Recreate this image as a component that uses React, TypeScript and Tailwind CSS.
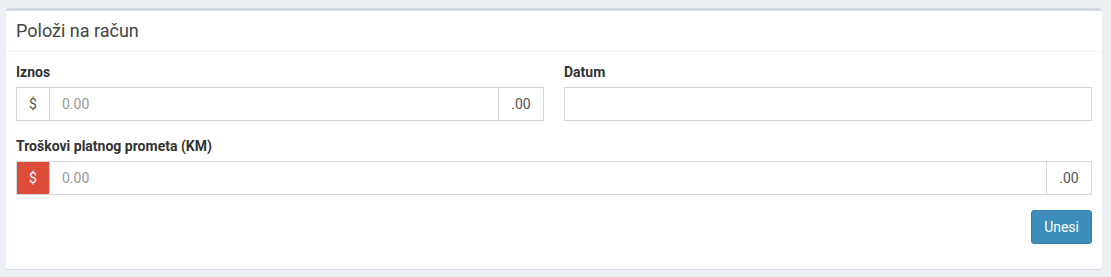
import React from "react";

const Addon = ({ children, className = "" }: { children: React.ReactNode; className?: string }) => (
  <span
    className={`flex items-center justify-center border border-[#d2d6de] text-[14px] text-[#555] ${className}`}
  >
    {children}
  </span>
);

const MoneyInput = ({ danger = false }: { danger?: boolean }) => (
  <div className="flex h-[34px]">
    {danger ? (
      <Addon className="w-[34px] border-[#d2d6de] bg-[#dd4b39] text-white">$</Addon>
    ) : (
      <Addon className="w-[34px] bg-white">$</Addon>
    )}
    <input
      type="text"
      placeholder="0.00"
      className="min-w-0 flex-1 border-y border-[#d2d6de] px-3 text-[14px] text-[#555] outline-none placeholder:text-[#999]"
    />
    <Addon className="w-[46px] bg-white">.00</Addon>
  </div>
);

export default function App() {
  return (
    <div className="min-h-[277px] bg-[#ecf0f5] pt-2 pr-[9px] pl-[6px] font-['Roboto',sans-serif]">
      <div className="rounded-[3px] border-t-[3px] border-[#d2d6de] bg-white shadow-[0_1px_1px_rgba(0,0,0,0.1)]">
        <div className="border-b border-[#f4f4f4] p-[10px]">
          <h3 className="text-[18px] leading-[20px] text-[#444]">Položi na račun</h3>
        </div>
        <form className="p-[10px]" onSubmit={(e) => e.preventDefault()}>
          <div className="grid grid-cols-[528px_1fr] gap-x-[20px]">
            <div className="mb-[15px]">
              <label className="mb-[5px] block text-[14px] leading-[20px] font-bold text-[#333]">Iznos</label>
              <MoneyInput />
            </div>
            <div className="mb-[15px]">
              <label className="mb-[5px] block text-[14px] leading-[20px] font-bold text-[#333]">Datum</label>
              <input
                type="text"
                className="block h-[34px] w-full border border-[#d2d6de] px-3 text-[14px] text-[#555] outline-none"
              />
            </div>
          </div>
          <div className="mb-[15px]">
            <label className="mb-[5px] block text-[14px] leading-[20px] font-bold text-[#333]">
              Troškovi platnog prometa (KM)
            </label>
            <MoneyInput danger />
          </div>
          <div className="mb-[15px] flex justify-end">
            <button
              type="submit"
              className="h-[34px] rounded-[3px] border border-[#367fa9] bg-[#3c8dbc] px-3 text-[14px] text-white"
            >
              Unesi
            </button>
          </div>
        </form>
      </div>
    </div>
  );
}
